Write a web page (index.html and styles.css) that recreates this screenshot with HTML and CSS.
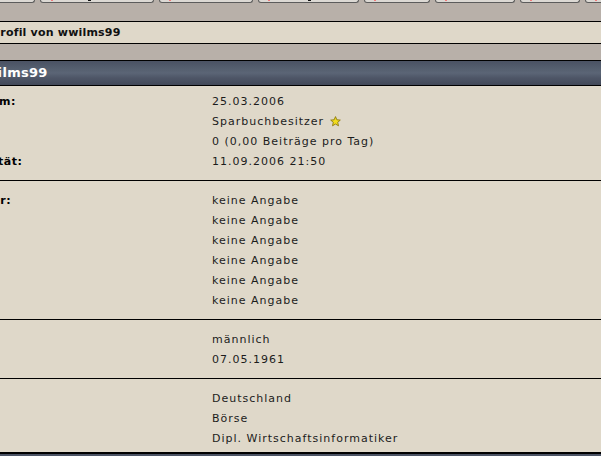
FILE: index.html
```html
<!DOCTYPE html>
<html lang="de">
<head>
<meta charset="utf-8">
<title>Profil von wwilms99</title>
<link rel="stylesheet" href="styles.css">
</head>
<body>
<div class="tabs">
  <div class="tab tab-cut w35"></div>
  <div class="tab w114"><i class="mark red m11"></i><i class="mark dark m47"></i></div>
  <div class="tab w94"><i class="mark red m10"></i></div>
  <div class="tab w101"><i class="mark red m10"></i><i class="mark dark m49"></i></div>
  <div class="tab w66"><i class="mark red m10"></i></div>
  <div class="tab w80"><i class="mark red m10"></i></div>
  <div class="tab w60"><i class="mark red m10"></i></div>
  <div class="tab w60"><i class="mark red m10"></i></div>
</div>
<div class="sheet">
  <div class="gap"></div>
  <div class="titlebar">Profil von wwilms99</div>
  <div class="gap gap-small"></div>
  <div class="head">wwilms99</div>
  <div class="section first">
    <div class="row"><span class="label l1">Registrierungsdatum:</span><span class="value">25.03.2006</span></div>
    <div class="row"><span class="label">Rang:</span><span class="value">Sparbuchbesitzer <svg class="star" width="11" height="11" viewBox="0 0 11 11"><path d="M5.5 0.6 L6.9 3.8 L10.3 4.1 L7.7 6.3 L8.5 9.8 L5.5 8 L2.5 9.8 L3.3 6.3 L0.7 4.1 L4.1 3.8 Z" fill="#f2dc1c" stroke="#8c7a12" stroke-width="0.9" stroke-linejoin="round"/></svg></span></div>
    <div class="row"><span class="label">Beiträge:</span><span class="value">0 (0,00 Beiträge pro Tag)</span></div>
    <div class="row"><span class="label l4">Letzte Aktivität:</span><span class="value">11.09.2006 21:50</span></div>
  </div>
  <div class="section">
    <div class="row"><span class="label l5">ICQ-Nummer:</span><span class="value">keine Angabe</span></div>
    <div class="row"><span class="label">AIM:</span><span class="value">keine Angabe</span></div>
    <div class="row"><span class="label">YIM:</span><span class="value">keine Angabe</span></div>
    <div class="row"><span class="label">MSN:</span><span class="value">keine Angabe</span></div>
    <div class="row"><span class="label">Skype:</span><span class="value">keine Angabe</span></div>
    <div class="row"><span class="label">Jabber:</span><span class="value">keine Angabe</span></div>
  </div>
  <div class="section">
    <div class="row"><span class="label">Geschlecht:</span><span class="value">männlich</span></div>
    <div class="row"><span class="label">Geburtstag:</span><span class="value">07.05.1961</span></div>
  </div>
  <div class="section last">
    <div class="row"><span class="label">Wohnort:</span><span class="value">Deutschland</span></div>
    <div class="row"><span class="label">Hobbies:</span><span class="value">Börse</span></div>
    <div class="row"><span class="label">Beruf:</span><span class="value">Dipl. Wirtschaftsinformatiker</span></div>
  </div>
  <div class="head foot"></div>
</div>
</body>
</html>
```

FILE: styles.css
```css
html, body {
  margin: 0;
  padding: 0;
}
body {
  background: #b8b0a9;
  overflow: hidden;
  width: 601px;
  height: 456px;
  font-family: "DejaVu Sans", Verdana, sans-serif;
  font-size: 11px;
  color: #111;
}
.tabs {
  display: flex;
  gap: 5px;
  height: 3px;
  overflow: hidden;
}
.tab {
  position: relative;
  flex: none;
  box-sizing: border-box;
  height: 3px;
  background: #dcd9d4;
  border: 1px solid #5c5c5c;
  border-top: none;
  border-radius: 0 0 3px 3px;
}
.tab-cut {
  border-left: none;
  border-radius: 0 0 3px 0;
}
.w35 { width: 35px; }
.w114 { width: 114px; }
.w94 { width: 94px; }
.w101 { width: 101px; }
.w66 { width: 66px; }
.w80 { width: 80px; }
.w60 { width: 60px; }
.mark {
  position: absolute;
  top: 0;
  height: 1px;
  width: 2px;
}
.red { background: #f07a7a; }
.dark { background: #111; width: 3px; }
.m10 { left: 9px; }
.m11 { left: 10px; }
.m47 { left: 47px; }
.m49 { left: 49px; }

.sheet {
  margin-left: -160px;
  width: 761px;
}
.gap {
  height: 18px;
  border-bottom: 1px solid #000;
}
.gap-small {
  height: 16px;
}
.titlebar {
  height: 21px;
  line-height: 21px;
  background: #dfd8c9;
  border-bottom: 1px solid #000;
  font-weight: bold;
  letter-spacing: 0.2px;
  padding-left: 152px;
}
.head {
  height: 24px;
  line-height: 24px;
  background: linear-gradient(#4a5263 0%, #566070 35%, #5b6576 50%, #4e5667 70%, #434959 100%);
  color: #fff;
  font-weight: bold;
  font-size: 13px;
  letter-spacing: 0.3px;
  padding-left: 133px;
}
.section {
  background: #dfd8c9;
  border-top: 1px solid #000;
  padding: 9px 0;
}
.section.first {
  padding-top: 5px;
}
.section.last {
  padding-bottom: 4px;
  border-bottom: 2px solid #000;
}
.row {
  display: flex;
  box-sizing: border-box;
  height: 20px;
  line-height: 20px;
  padding-top: 1px;
}
.label {
  width: 372px;
  flex: none;
  font-weight: bold;
  letter-spacing: 0.5px;
  color: #000;
  white-space: nowrap;
  padding-left: 28px;
  box-sizing: border-box;
}
.l1 { padding-left: 30px; }
.l4 { padding-left: 73px; }
.l5 { padding-left: 82px; }
.value {
  color: #1c1c1c;
  letter-spacing: 1px;
  white-space: nowrap;
  display: flex;
  align-items: center;
  gap: 6px;
}
.star {
  display: block;
  margin-top: -1px;
}
```
